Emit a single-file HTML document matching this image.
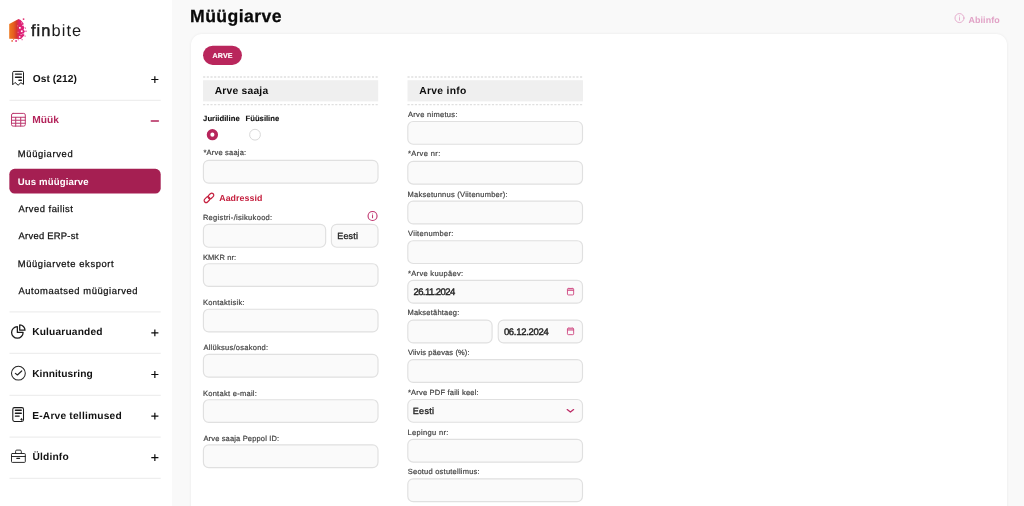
<!DOCTYPE html>
<html lang="et">
<head>
<meta charset="utf-8">
<title>Müügiarve</title>
<style>
*{box-sizing:border-box;margin:0;padding:0}
html,body{width:1024px;height:506px;overflow:hidden;background:#f9f9f9;font-family:"Liberation Sans",sans-serif;color:#111}
#side{position:absolute;left:0;top:0;width:172px;height:506px;background:#fff}
.t{position:absolute;white-space:nowrap;line-height:14px;text-rendering:geometricPrecision}
#tl{position:absolute;left:0;top:0;width:1024px;height:506px;will-change:transform}
#card{position:absolute;left:191.2px;top:33.7px;width:815.8px;height:500px;background:#fff;border-radius:11px;box-shadow:0 0 3px rgba(0,0,0,0.07)}
svg{position:absolute;overflow:visible}
</style>
</head>
<body>
<div id="side">
</div>
<div id="card"></div>


<svg width="1024" height="506" viewBox="0 0 1024 506" style="left:0;top:0">
  <rect x="9.35" y="168.85" width="151.35" height="24.6" rx="5.3" fill="#a51f52"/>
  <rect x="203.05" y="45.65" width="38.85" height="19.25" rx="9.62" fill="#b9265c"/>
  <rect x="203.05" y="80.2" width="175.15" height="21.2" fill="#efefef"/>
  <rect x="407.5" y="80.2" width="175.45" height="21.2" fill="#efefef"/>
  <path d="M9.5,100.4 H160.7 M9.5,311.95 H160.7 M9.5,353.4 H160.7 M9.5,395.3 H160.7 M9.5,437.1 H160.7 M9.5,478.4 H160.7" stroke="#eeeeee" stroke-width="1.25" fill="none"/>
  <g stroke="#e0e0e0" stroke-width="1.4" stroke-dasharray="2.15 1.52" fill="none">
    <path d="M203.1,77.05 H378.3 M203.1,104.6 H378.3 M407.5,77.05 H583 M407.5,104.6 H583"/>
  </g>
</svg>
<!-- radios -->
<svg width="1024" height="506" viewBox="0 0 1024 506" style="left:0;top:0">
  <circle cx="212.4" cy="134.65" r="3.85" fill="#fff" stroke="#b7255b" stroke-width="3.6"/>
  <circle cx="255.0" cy="134.7" r="5.4" fill="#fff" stroke="#d9d9d9" stroke-width="1"/>
</svg>

<svg width="1024" height="506" viewBox="0 0 1024 506" style="left:0;top:0" fill="#fafafa" stroke="#e0e0e0" stroke-width="1.15">
<rect x="203.40" y="160.40" width="174.60" height="22.70" rx="5.3"/>
<rect x="203.40" y="263.70" width="174.60" height="22.70" rx="5.3"/>
<rect x="203.40" y="309.20" width="174.60" height="22.70" rx="5.3"/>
<rect x="203.40" y="354.40" width="174.60" height="22.70" rx="5.3"/>
<rect x="203.40" y="399.70" width="174.60" height="22.70" rx="5.3"/>
<rect x="203.40" y="444.90" width="174.60" height="22.70" rx="5.3"/>
<rect x="203.40" y="224.40" width="122.25" height="22.80" rx="5.3"/>
<rect x="331.40" y="224.40" width="46.60" height="22.80" rx="5.3"/>
<rect x="407.80" y="121.50" width="174.70" height="22.75" rx="5.3"/>
<rect x="407.80" y="161.30" width="174.70" height="22.75" rx="5.3"/>
<rect x="407.80" y="201.10" width="174.70" height="22.75" rx="5.3"/>
<rect x="407.80" y="240.70" width="174.70" height="22.75" rx="5.3"/>
<rect x="407.80" y="280.40" width="174.70" height="22.75" rx="5.3"/>
<rect x="407.80" y="359.60" width="174.70" height="22.75" rx="5.3"/>
<rect x="407.80" y="399.50" width="174.70" height="22.75" rx="5.3"/>
<rect x="407.80" y="439.30" width="174.70" height="22.75" rx="5.3"/>
<rect x="407.80" y="478.90" width="174.70" height="22.75" rx="5.3"/>
<rect x="407.80" y="320.10" width="84.30" height="22.75" rx="5.3"/>
<rect x="498.25" y="320.10" width="84.25" height="22.75" rx="5.3"/>
</svg>

<div id="tl">
<div class="t" style="left:190.1px;top:8.90px;font-size:17.6px;font-weight:bold;color:#0a0a0a;letter-spacing:0.425px;-webkit-text-stroke:0.3px #0a0a0a">Müügiarve</div>
<div class="t" style="left:31.0px;top:24.07px;font-size:16.4px;font-weight:normal;color:#1a1a1a;letter-spacing:1.067px"><span style="-webkit-text-stroke:0.45px #1a1a1a">fin</span>bite</div>
<div class="t" style="left:32.7px;top:73.27px;font-size:10.2px;font-weight:bold;color:#111;letter-spacing:0.086px">Ost (212)</div>
<div class="t" style="left:32.2px;top:114.07px;font-size:10.2px;font-weight:bold;color:#b3235a;letter-spacing:0.064px">Müük</div>
<div class="t" style="left:17.8px;top:146.54px;font-size:9.4px;font-weight:normal;color:#111;letter-spacing:0.656px;-webkit-text-stroke:0.25px #111">Müügiarved</div>
<div class="t" style="left:17.8px;top:175.87px;font-size:9.6px;font-weight:bold;color:#fff;letter-spacing:0.124px">Uus müügiarve</div>
<div class="t" style="left:18.5px;top:201.74px;font-size:9.4px;font-weight:normal;color:#111;letter-spacing:0.490px;-webkit-text-stroke:0.25px #111">Arved failist</div>
<div class="t" style="left:18.5px;top:228.94px;font-size:9.4px;font-weight:normal;color:#111;letter-spacing:0.278px;-webkit-text-stroke:0.25px #111">Arved ERP-st</div>
<div class="t" style="left:17.8px;top:257.14px;font-size:9.4px;font-weight:normal;color:#111;letter-spacing:0.608px;-webkit-text-stroke:0.25px #111">Müügiarvete eksport</div>
<div class="t" style="left:18.5px;top:283.94px;font-size:9.4px;font-weight:normal;color:#111;letter-spacing:0.579px;-webkit-text-stroke:0.25px #111">Automaatsed müügiarved</div>
<div class="t" style="left:32.2px;top:325.87px;font-size:10.2px;font-weight:bold;color:#111;letter-spacing:0.168px">Kuluaruanded</div>
<div class="t" style="left:32.2px;top:367.67px;font-size:10.2px;font-weight:bold;color:#111;letter-spacing:0.041px">Kinnitusring</div>
<div class="t" style="left:32.2px;top:409.87px;font-size:10.2px;font-weight:bold;color:#111;letter-spacing:0.215px">E-Arve tellimused</div>
<div class="t" style="left:32.5px;top:450.87px;font-size:10.2px;font-weight:bold;color:#111;letter-spacing:0.176px">Üldinfo</div>
<div class="t" style="left:968.5px;top:13.12px;font-size:8.9px;font-weight:bold;color:#e1a2c6;letter-spacing:0.106px">Abiinfo</div>
<div class="t" style="left:212.5px;top:48.74px;font-size:7.1px;font-weight:bold;color:#fff;letter-spacing:0.135px;-webkit-text-stroke:0.15px #fff">ARVE</div>
<div class="t" style="left:214.7px;top:85.23px;font-size:10.3px;font-weight:bold;color:#0c0c0c;letter-spacing:0.213px">Arve saaja</div>
<div class="t" style="left:419.2px;top:85.03px;font-size:10.3px;font-weight:bold;color:#0c0c0c;letter-spacing:0.307px">Arve info</div>
<div class="t" style="left:203.1px;top:112.13px;font-size:7.7px;font-weight:bold;color:#111;letter-spacing:0.029px;-webkit-text-stroke:0.12px #111">Juriidiline</div>
<div class="t" style="left:245.6px;top:112.13px;font-size:7.7px;font-weight:bold;color:#111;letter-spacing:-0.019px;-webkit-text-stroke:0.12px #111">Füüsiline</div>
<div class="t" style="left:219.2px;top:190.75px;font-size:8.8px;font-weight:bold;color:#c5203f;letter-spacing:0.094px">Aadressid</div>
<div class="t" style="left:337.2px;top:229.43px;font-size:9.0px;font-weight:normal;color:#262626;letter-spacing:0.209px;-webkit-text-stroke:0.34px #262626">Eesti</div>
<div class="t" style="left:413.4px;top:285.51px;font-size:9.5px;font-weight:normal;color:#222;letter-spacing:-0.549px;-webkit-text-stroke:0.38px #222">26.11.2024</div>
<div class="t" style="left:503.9px;top:325.91px;font-size:9.5px;font-weight:normal;color:#222;letter-spacing:-0.300px;-webkit-text-stroke:0.38px #222">06.12.2024</div>
<div class="t" style="left:412.8px;top:404.03px;font-size:9.0px;font-weight:normal;color:#222;letter-spacing:0.309px;-webkit-text-stroke:0.33px #222">Eesti</div>
<div class="t" style="left:203.4px;top:145.95px;font-size:7.5px;font-weight:normal;color:#444;letter-spacing:0.206px;-webkit-text-stroke:0.2px #444">*Arve saaja:</div>
<div class="t" style="left:202.9px;top:211.40px;font-size:7.5px;font-weight:normal;color:#444;letter-spacing:0.313px;-webkit-text-stroke:0.2px #444">Registri-/isikukood:</div>
<div class="t" style="left:202.9px;top:251.00px;font-size:7.5px;font-weight:normal;color:#444;letter-spacing:0.112px;-webkit-text-stroke:0.2px #444">KMKR nr:</div>
<div class="t" style="left:202.9px;top:296.40px;font-size:7.5px;font-weight:normal;color:#444;letter-spacing:0.304px;-webkit-text-stroke:0.2px #444">Kontaktisik:</div>
<div class="t" style="left:203.4px;top:341.20px;font-size:7.5px;font-weight:normal;color:#444;letter-spacing:0.265px;-webkit-text-stroke:0.2px #444">Allüksus/osakond:</div>
<div class="t" style="left:202.9px;top:386.80px;font-size:7.5px;font-weight:normal;color:#444;letter-spacing:0.283px;-webkit-text-stroke:0.2px #444">Kontakt e-mail:</div>
<div class="t" style="left:203.4px;top:431.95px;font-size:7.5px;font-weight:normal;color:#444;letter-spacing:0.163px;-webkit-text-stroke:0.2px #444">Arve saaja Peppol ID:</div>
<div class="t" style="left:408.0px;top:108.20px;font-size:7.5px;font-weight:normal;color:#444;letter-spacing:0.303px;-webkit-text-stroke:0.2px #444">Arve nimetus:</div>
<div class="t" style="left:408.0px;top:147.40px;font-size:7.5px;font-weight:normal;color:#444;letter-spacing:0.395px;-webkit-text-stroke:0.2px #444">*Arve nr:</div>
<div class="t" style="left:407.5px;top:188.40px;font-size:7.5px;font-weight:normal;color:#444;letter-spacing:0.260px;-webkit-text-stroke:0.2px #444">Maksetunnus (Viitenumber):</div>
<div class="t" style="left:408.0px;top:226.60px;font-size:7.5px;font-weight:normal;color:#444;letter-spacing:0.307px;-webkit-text-stroke:0.2px #444">Viitenumber:</div>
<div class="t" style="left:408.0px;top:266.80px;font-size:7.5px;font-weight:normal;color:#444;letter-spacing:0.321px;-webkit-text-stroke:0.2px #444">*Arve kuupäev:</div>
<div class="t" style="left:407.5px;top:306.40px;font-size:7.5px;font-weight:normal;color:#444;letter-spacing:0.221px;-webkit-text-stroke:0.2px #444">Maksetähtaeg:</div>
<div class="t" style="left:408.0px;top:346.15px;font-size:7.5px;font-weight:normal;color:#444;letter-spacing:0.119px;-webkit-text-stroke:0.2px #444">Viivis päevas (%):</div>
<div class="t" style="left:408.0px;top:385.60px;font-size:7.5px;font-weight:normal;color:#444;letter-spacing:0.198px;-webkit-text-stroke:0.2px #444">*Arve PDF faili keel:</div>
<div class="t" style="left:407.5px;top:426.00px;font-size:7.5px;font-weight:normal;color:#444;letter-spacing:0.332px;-webkit-text-stroke:0.2px #444">Lepingu nr:</div>
<div class="t" style="left:407.8px;top:465.40px;font-size:7.5px;font-weight:normal;color:#444;letter-spacing:0.224px;-webkit-text-stroke:0.2px #444">Seotud ostutellimus:</div>
</div>

<svg width="1024" height="506" viewBox="0 0 1024 506" style="left:0;top:0;pointer-events:none" fill="none" stroke-linecap="round" stroke-linejoin="round">
  <defs>
    <linearGradient id="lg" x1="9" y1="0" x2="25" y2="0" gradientUnits="userSpaceOnUse">
      <stop offset="0" stop-color="#ee7c22"/><stop offset="0.28" stop-color="#e55f1e"/><stop offset="0.48" stop-color="#d6372f"/><stop offset="0.66" stop-color="#dd2170"/><stop offset="1" stop-color="#e0207f"/>
    </linearGradient>
  </defs>
  <!-- logo mark -->
  <g stroke="none">
    <polygon points="9.2,23.9 18.6,19.0 20.6,19.9 22.0,21.6 23.6,23.4 23.2,25.6 24.4,27.6 23.6,29.6 25.0,31.2 24.0,33.0 24.3,35.4 22.6,37.2 21.0,38.9 9.2,38.7" fill="url(#lg)"/>
    <rect x="19.0" y="27.0" width="1.7" height="1.7" fill="#fff"/>
    <rect x="20.9" y="30.4" width="1.7" height="1.7" fill="#fff"/>
    <rect x="18.9" y="36.2" width="1.5" height="1.5" fill="#fff"/>
    <rect x="22.2" y="24.8" width="1.1" height="1.1" fill="#fff" opacity="0.85"/>
    <rect x="22.6" y="33.2" width="1.1" height="1.1" fill="#fff" opacity="0.85"/>
    <rect x="20.6" y="34.0" width="1.0" height="1.0" fill="#fff" opacity="0.7"/>
    <rect x="21.2" y="22.4" width="1.0" height="1.0" fill="#fff" opacity="0.7"/>
    <rect x="17.6" y="31.8" width="1.0" height="1.0" fill="#fff" opacity="0.45"/>
    <rect x="17.2" y="25.4" width="1.0" height="1.0" fill="#fff" opacity="0.35"/>
    <rect x="22.8" y="18.4" width="1.5" height="1.5" fill="#e0266a"/>
    <rect x="24.9" y="27.6" width="1.0" height="1.0" fill="#e0207f"/>
    <rect x="25.4" y="30.6" width="1.2" height="1.2" fill="#e0207f"/>
    <rect x="24.6" y="35.6" width="1.0" height="1.0" fill="#e0207f"/>
    <rect x="21.6" y="39.2" width="1.0" height="1.0" fill="#e0207f"/>
    <rect x="15.3" y="40.2" width="1.6" height="1.6" fill="#e0267a"/>
    <rect x="11.4" y="40.2" width="1.5" height="1.5" fill="#e8602a"/>
    <rect x="13.2" y="39.1" width="0.9" height="0.9" fill="#e8602a"/>
    <rect x="17.8" y="39.3" width="0.9" height="0.9" fill="#e0267a"/>
  </g>

  <!-- receipt (Ost) -->
  <g stroke="#1a1a1a" stroke-width="1.0">
    <path d="M12.7,84.4 V72.6 Q12.7,71.4 13.9,71.4 H22.3 Q23.5,71.4 23.5,72.6 V84.4 L20.9,82.7 L18.1,85.2 L15.3,82.7 Z"/>
    <path d="M15.5,74.1 H21.4 M15.5,77.2 H21.4 M18.9,80.2 H21.4" stroke-width="1.35"/>
  </g>

  <!-- table (Müük) -->
  <g stroke="#bd3a70" stroke-width="1">
    <rect x="11.5" y="113.4" width="13.8" height="12.7" rx="1.6"/>
    <path d="M11.5,117.2 H25.3 M11.5,120.2 H25.3 M11.5,123.2 H25.3 M15.7,117.2 V126.1 M20.7,117.2 V126.1" stroke-width="1.05"/>
  </g>

  <!-- pie (Kuluaruanded) -->
  <g stroke="#1a1a1a" stroke-width="1.25">
    <path d="M17.35,326.7 A5.75,5.75 0 1 0 23.1,332.45 H17.35 Z"/>
    <path d="M19.7,324.9 V330.2 H25.0 A5.3,5.3 0 0 0 19.7,324.9 Z"/>
  </g>

  <!-- check circle (Kinnitusring) -->
  <g stroke="#262626" stroke-width="1.05">
    <circle cx="18.4" cy="373.15" r="6.9"/>
    <path d="M15.4,373.4 L17.4,375 L21.7,371" stroke-width="1.2"/>
  </g>

  <!-- document (E-Arve) -->
  <g stroke="#1a1a1a" stroke-width="1.05">
    <rect x="12.8" y="407.6" width="10.7" height="13.8" rx="1.6"/>
    <path d="M15.4,410.2 H21.3 M15.4,413.2 H21.3 M15.4,416.1 H19.2" stroke-width="1.35"/>
    <path d="M20.7,419.4 H22.3 M21.5,418.6 V420.2" stroke-width="0.9"/>
  </g>

  <!-- briefcase (Üldinfo) -->
  <g stroke="#222" stroke-width="0.95">
    <rect x="11.5" y="453.5" width="13.8" height="8.9" rx="0.8"/>
    <path d="M15.6,453.5 V451.3 Q15.6,450.1 16.8,450.1 H20.1 Q21.3,450.1 21.3,451.3 V453.5"/>
    <path d="M11.5,456.5 H25.3"/>
    <path d="M16.8,458.3 H19.6" stroke-width="1.2"/>
  </g>

  <!-- plus / minus -->
  <g stroke="#0c0c0c" stroke-width="1.2" stroke-linecap="butt">
    <path d="M151.3,79.5 H158.4 M154.85,76.2 V82.9"/>
    <path d="M151.3,332.9 H158.4 M154.85,329.5 V336.3"/>
    <path d="M151.3,374.5 H158.4 M154.85,371.1 V377.9"/>
    <path d="M151.3,416.1 H158.4 M154.85,412.7 V419.5"/>
    <path d="M151.3,457.7 H158.4 M154.85,454.3 V461.1"/>
  </g>
  <path d="M151.3,121 H158.4" stroke="#b3235a" stroke-width="1.45"/>

  <!-- Abiinfo icon -->
  <g stroke="#e3a6c8" stroke-width="0.9">
    <circle cx="959.5" cy="18.05" r="4.5"/>
    <path d="M959.5,17.6 V20.2 M959.5,15.9 V16"/>
  </g>

  <!-- link icon -->
  <g stroke="#c5203f" stroke-width="1.2">
    <rect x="-3.2" y="-2" width="6.4" height="4" rx="2" transform="translate(207.0,199.7) rotate(-45)"/>
    <rect x="-3.2" y="-2" width="6.4" height="4" rx="2" transform="translate(210.9,196.0) rotate(-45)"/>
  </g>

  <!-- info icon -->
  <g stroke="#c0356f" stroke-width="1.12">
    <circle cx="372.55" cy="216" r="4.5"/>
    <path d="M372.55,215.5 V217.8 M372.55,214.0 V214.05" stroke-width="1"/>
  </g>

  <!-- calendar icons -->
  <g stroke="#cc3b79" stroke-width="0.85" stroke-linecap="butt">
    <rect x="567.45" y="288.45" width="6.2" height="1.9" fill="#cc3b79" fill-opacity="0.35" stroke="none"/>
    <rect x="567.45" y="288.45" width="6.2" height="6.5" rx="0.9"/>
    <path d="M567.45,290.35 H573.65 M568.8,287.90 V288.45 M572.3,287.90 V288.45"/>
    <rect x="567.45" y="328.15" width="6.2" height="1.9" fill="#cc3b79" fill-opacity="0.35" stroke="none"/>
    <rect x="567.45" y="328.15" width="6.2" height="6.5" rx="0.9"/>
    <path d="M567.45,330.05 H573.65 M568.8,327.60 V328.15 M572.3,327.60 V328.15"/>
  </g>

  <!-- chevron -->
  <path d="M567.2,409.6 L570.4,412.1 L573.6,409.6" stroke="#bd2c66" stroke-width="1.3"/>
</svg>

</body>
</html>
